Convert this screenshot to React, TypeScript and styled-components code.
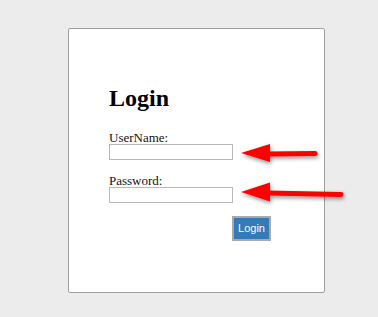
import React from "react";
import styled, { createGlobalStyle } from "styled-components";

const Global = createGlobalStyle`
  html, body { margin: 0; padding: 0; background: #ececec; }
  body { font-family: "Liberation Serif", "Times New Roman", serif; }
`;

const Page = styled.div`
  position: relative;
  width: 378px;
  height: 317px;
  overflow: hidden;
  padding: 28px 0 0 68px;
  box-sizing: border-box;
`;

const Card = styled.div`
  width: 257px;
  height: 265px;
  box-sizing: border-box;
  background: #ffffff;
  border: 1px solid #a0a0a0;
  border-radius: 2px;
  padding: 56px 0 0 40px;
  display: flex;
  flex-direction: column;
  align-items: flex-start;
`;

const Title = styled.h1`
  margin: 0;
  font-family: "Liberation Serif", "Times New Roman", serif;
  font-size: 24px;
  line-height: 27px;
  font-weight: bold;
  color: #000;
`;

const Field = styled.div<{ $top: number }>`
  display: flex;
  flex-direction: column;
  margin-top: ${(p) => p.$top}px;
`;

const Label = styled.label`
  display: block;
  height: 13px;
  font-size: 13px;
  line-height: 13px;
  color: #111;
`;

const Input = styled.input`
  width: 124px;
  height: 16px;
  box-sizing: border-box;
  margin: 0;
  padding: 0 2px;
  border: 1px solid #b8b8b8;
  background: #fff;
  outline: none;
`;

const ButtonRow = styled.div`
  margin-top: 13px;
  padding-left: 123px;
  display: flex;
`;

const Button = styled.button`
  width: 39px;
  height: 25px;
  box-sizing: border-box;
  margin: 0;
  padding: 0;
  background: #337ab7;
  border: 2px solid #a9a9a9;
  color: #ffffff;
  font-family: "Liberation Sans", Arial, sans-serif;
  font-size: 11px;
  line-height: 21px;
  text-align: center;
`;

const Overlay = styled.svg`
  position: absolute;
  left: 0;
  top: 0;
  pointer-events: none;
`;

type ArrowProps = { tipX: number; tipY: number; endX: number; endY: number; half: number };

const Arrow = ({ tipX, tipY, endX, endY, half }: ArrowProps) => {
  const backX = tipX + 29;
  return (
    <g filter="url(#arrowShadow)">
      <polygon
        points={`${tipX},${tipY} ${backX},${tipY - half} ${backX},${tipY + half}`}
        fill="#ff0000"
      />
      <line
        x1={backX - 3}
        y1={tipY + 1}
        x2={endX}
        y2={endY}
        stroke="#ff0000"
        strokeWidth={5}
        strokeLinecap="round"
      />
    </g>
  );
};

export default function App() {
  return (
    <>
      <Global />
      <Page>
        <Card>
          <Title>Login</Title>
          <Field $top={19}>
            <Label htmlFor="user">UserName:</Label>
            <Input id="user" type="text" />
          </Field>
          <Field $top={14}>
            <Label htmlFor="pass">Password:</Label>
            <Input id="pass" type="password" />
          </Field>
          <ButtonRow>
            <Button type="button">Login</Button>
          </ButtonRow>
        </Card>
        <Overlay width={378} height={317} viewBox="0 0 378 317">
          <defs>
            <filter id="arrowShadow" x="-20%" y="-60%" width="140%" height="220%">
              <feGaussianBlur in="SourceAlpha" stdDeviation="2.2" />
              <feOffset dx="1" dy="2" result="blur" />
              <feComponentTransfer>
                <feFuncA type="linear" slope="0.45" />
              </feComponentTransfer>
              <feMerge>
                <feMergeNode />
                <feMergeNode in="SourceGraphic" />
              </feMerge>
            </filter>
          </defs>
          <Arrow tipX={241} tipY={153} endX={315} endY={153.5} half={9} />
          <Arrow tipX={241} tipY={192} endX={341} endY={194.5} half={9.5} />
        </Overlay>
      </Page>
    </>
  );
}
